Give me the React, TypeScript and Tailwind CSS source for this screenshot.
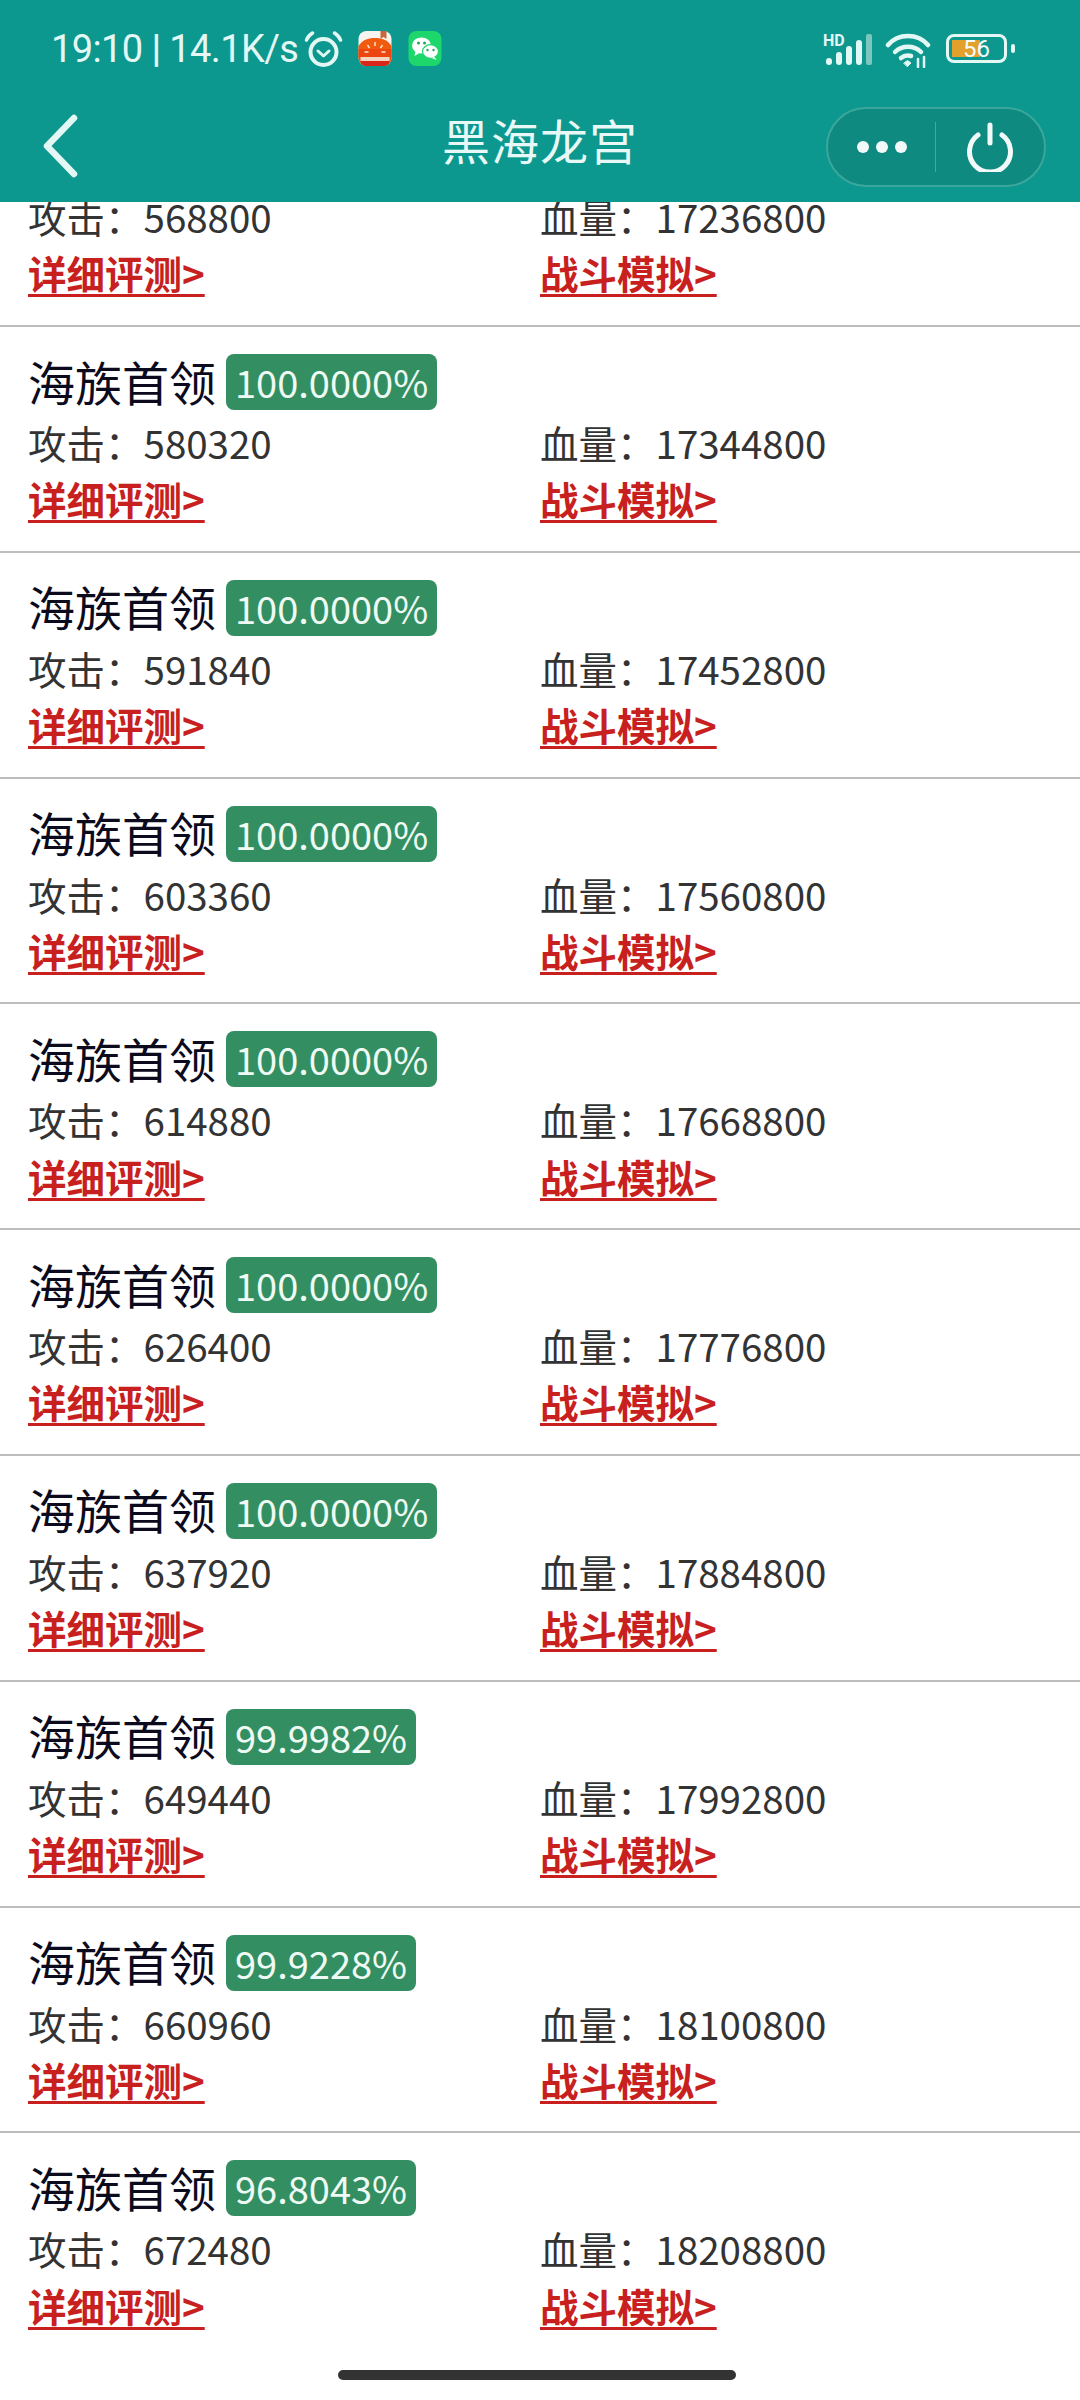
const rows = [
  { percent: "100.0000%", attack: 580320, hp: 17344800 },
  { percent: "100.0000%", attack: 591840, hp: 17452800 },
  { percent: "100.0000%", attack: 603360, hp: 17560800 },
  { percent: "100.0000%", attack: 614880, hp: 17668800 },
  { percent: "100.0000%", attack: 626400, hp: 17776800 },
  { percent: "100.0000%", attack: 637920, hp: 17884800 },
  { percent: "99.9982%", attack: 649440, hp: 17992800 },
  { percent: "99.9228%", attack: 660960, hp: 18100800 },
  { percent: "96.8043%", attack: 672480, hp: 18208800 },
];

function Stats({ attack, hp }: { attack: number; hp: number }) {
  return (
    <>
      <div className="grid h-[55px] grid-cols-2 items-center text-[38.5px] text-[#333]">
        <span>攻击：{attack}</span>
        <span>血量：{hp}</span>
      </div>
      <div className="grid h-[60px] grid-cols-2 items-center text-[38.5px] font-bold text-[#c81f1f]">
        <div><a className="underline decoration-[3px] underline-offset-[5px]">详细评测&gt;</a></div>
        <div><a className="underline decoration-[3px] underline-offset-[5px]">战斗模拟&gt;</a></div>
      </div>
    </>
  );
}

function StatusBar() {
  return (
    <div className="flex h-[70px] justify-between pl-[51px] pr-[65px] pt-[31px]">
      <div className="flex items-start">
        <span className="w-[245px] whitespace-nowrap font-['Roboto',sans-serif] text-[38px] leading-[36px] tracking-[-0.6px] text-[#e3f7f4]">
          19:10 <span className="font-bold">|</span> 14.1K/s
        </span>
        <svg width="39" height="36" viewBox="0 0 38 36" fill="none" stroke="#e3f7f4" strokeLinecap="round" strokeLinejoin="round" className="ml-[8px]">
          <circle cx="19" cy="21" r="13" strokeWidth="4" />
          <path d="M13.500 20l5.500 5 5.500-5" strokeWidth="3" />
          <path d="M2 9c1-3 3-5 6-7M36 9c-1-3-3-5-6-7" strokeWidth="3.500" />
        </svg>
        <svg width="34" height="35" viewBox="0 0 33 35" className="ml-[15px]">
          <rect width="33" height="35" rx="8" fill="#f7f3ee" />
          <path d="M0 15C4 9 9 7 16.500 7S29 9 33 15v12a8 8 0 0 1-8 8H8a8 8 0 0 1-8-8z" fill="#f25a10" />
          <path d="M0 18h33v9H0z" fill="#ec4510" />
          <path d="M16.500 11v4M9 14l2 3M24 14l-2 3M6 21h4M23 21h4" stroke="#fbe9d2" strokeWidth="1.400" />
          <rect x="2" y="26" width="29" height="4" fill="#f5d5c0" />
          <path d="M2 30h29c0 3-3 5-6 5H8c-3 0-6-2-6-5z" fill="#d8261a" />
          <path d="M22 0h6v8l-3-2-3 2z" fill="#c8663c" />
        </svg>
        <svg width="34" height="35" viewBox="0 0 33 35" className="ml-[16px]">
          <rect width="33" height="35" rx="8" fill="#1ed76c" />
          <ellipse cx="13" cy="14.500" rx="9.500" ry="8" fill="#fff" />
          <path d="M7 20l-1 5 5-3z" fill="#fff" />
          <ellipse cx="22" cy="20.500" rx="8" ry="6.800" fill="#fff" stroke="#1ed76c" strokeWidth="1.200" />
          <path d="M26 26l2 3-5-2z" fill="#fff" />
          <circle cx="10" cy="12" r="1.500" fill="#1ea85a" />
          <circle cx="16" cy="12" r="1.500" fill="#1ea85a" />
          <circle cx="19" cy="19" r="1.200" fill="#1ea85a" />
          <circle cx="25" cy="19" r="1.200" fill="#1ea85a" />
        </svg>
      </div>
      <div className="flex items-start">
        <svg width="49" height="32" viewBox="0 0 49 32" className="mt-[3px]">
          <text x="0" y="12" fontSize="16" fontWeight="700" fill="#e3f7f4" fontFamily="Roboto, sans-serif">HD</text>
          <rect x="3" y="24" width="6" height="7" rx="3" fill="#e3f7f4" />
          <rect x="13" y="18" width="6" height="13" rx="3" fill="#e3f7f4" />
          <rect x="23" y="12" width="6" height="19" rx="3" fill="#e3f7f4" />
          <rect x="33" y="6" width="6" height="25" rx="3" fill="#e3f7f4" />
          <rect x="43" y="0" width="6" height="31" rx="2" fill="#7cc7bd" />
        </svg>
        <svg width="46" height="36" viewBox="0 0 46 36" fill="none" stroke="#e3f7f4" strokeWidth="4.500" strokeLinecap="round" className="ml-[13px] mt-[1px]">
          <path d="M3 13C13 1 33 1 43 13" />
          <path d="M10 20c7-7 19-7 26 0" />
          <path d="M16 26c3-2.500 7-3 10-2" />
          <path d="M19 31l3.500-2.500L26 31l-3.500 3.500z" fill="#e3f7f4" strokeWidth="1" />
          <path d="M33 27v8M39 25v10" strokeWidth="2.500" />
        </svg>
        <div className="ml-[15px] mt-[3px] flex items-center">
          <div className="relative h-[29px] w-[61px] rounded-[8px] border-[3px] border-[#e3f7f4]">
            <div className="absolute left-[3px] top-[3px] h-[17px] w-[28px] bg-[#e3a02b]" />
            <span className="absolute inset-0 flex items-center justify-center font-['Roboto',sans-serif] text-[24px] leading-none text-[#f4fbfa]">56</span>
          </div>
          <div className="ml-[4px] h-[9px] w-[4px] rounded-[2px] bg-[#e3f7f4]" />
        </div>
      </div>
    </div>
  );
}

function NavBar() {
  return (
    <div className="relative flex h-[132px] items-center justify-center">
      <svg width="38" height="64" viewBox="0 0 38 64" fill="none" stroke="#e3f7f4" strokeWidth="6.500" strokeLinecap="round" strokeLinejoin="round" className="absolute left-[42px] top-[44px]">
        <path d="M32 4L5 32l27 28" />
      </svg>
      <h1 className="mt-[6px] text-[48px] leading-none tracking-[1px] text-[#e8f8f6]">黑海龙宫</h1>
      <div className="absolute right-[34px] top-[37px] flex h-[80px] w-[220px] items-center rounded-full border-2 border-[#3ba79c] bg-[#0f8a80]">
        <div className="flex w-[107px] justify-center gap-[7px]">
          <span className="size-[12px] rounded-full bg-[#f2faf9]" />
          <span className="size-[12px] rounded-full bg-[#f2faf9]" />
          <span className="size-[12px] rounded-full bg-[#f2faf9]" />
        </div>
        <div className="h-[50px] w-px bg-[#45a99f]" />
        <div className="flex flex-1 justify-center">
          <svg width="50" height="50" viewBox="0 0 50 50" fill="none" stroke="#f2faf9" strokeWidth="5" strokeLinecap="round">
            <path d="M13 13a20.500 20.500 0 1 0 24 0" />
            <path d="M25 3v18" />
          </svg>
        </div>
      </div>
    </div>
  );
}

export default function App() {
  return (
    <div className="relative flex h-[2400px] w-[1080px] flex-col overflow-hidden bg-white font-['Noto_Sans_CJK_SC','Noto_Sans',sans-serif]">
      <header className="z-10 shrink-0 bg-[#0c988e]">
        <StatusBar />
        <NavBar />
      </header>

      <main className="flex-1 overflow-hidden">
        <div className="-mt-[14px] h-[139px] border-b-2 border-[#bdbdbd] px-[28px]">
          <Stats attack={568800} hp={17236800} />
        </div>
        {rows.map((row) => (
          <div key={row.attack} className="h-[225.8px] border-b-2 border-[#bdbdbd] px-[28px] pt-[27px] last:border-b-0">
            <div className="flex h-[56px] items-center">
              <span className="-mt-[4px] text-[47px] leading-none text-[#0b0b1d]">海族首领</span>
              <span className="ml-[10px] flex h-[56px] items-center rounded-[8px] bg-[#338f62] px-[9px] text-[38px] leading-none text-[#eefaf3]">{row.percent}</span>
            </div>
            <div className="mt-[4px]">
              <Stats attack={row.attack} hp={row.hp} />
            </div>
          </div>
        ))}
      </main>

      <div className="absolute left-[338px] top-[2370px] h-[10px] w-[398px] rounded-full bg-[#333]" />
    </div>
  );
}
